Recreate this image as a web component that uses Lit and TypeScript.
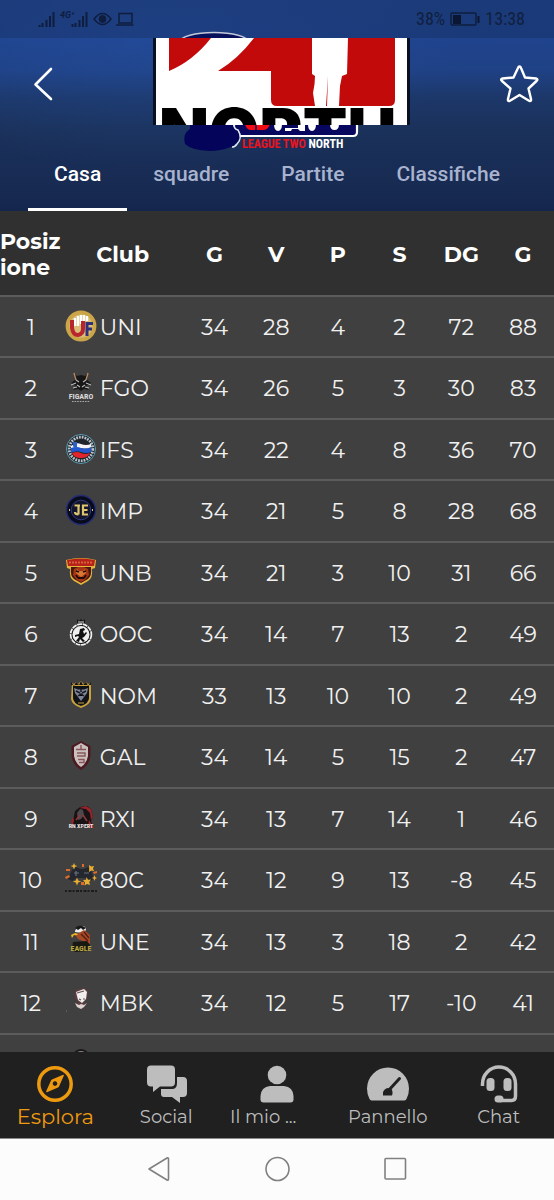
import { LitElement, html, svg, css } from "lit";
import { customElement, state } from "lit/decorators.js";
import { classMap } from "lit/directives/class-map.js";

type Row = { club: string; values: number[]; badge: unknown };

const badges: Record<string, unknown> = {
  UNI: svg`
    <circle cx="16" cy="16" r="15.4" fill="#caa648"/>
    <circle cx="16" cy="16" r="11.5" fill="#d9bd78"/>
    <path d="M10 8v8M13 6v10M16 5v9M19 5v6M22 6v5" stroke="#fff" stroke-width="2.4"/>
    <path d="M7 10v8q1 7 6 7 5-1 5-6v-8" fill="none" stroke="#b9252c" stroke-width="4"/>
    <path d="M22 26V13.500h6M22 19h5" fill="none" stroke="#30317d" stroke-width="3"/>`,
  FGO: svg`
    <path d="M9 2l3 3 4-1 4 1 3-3-1 7 4 3-5 3 3 4-5-1-3 2-3-2-5 1 3-4-5-3 4-3z" fill="#171717"/>
    <path d="M9 2l2 7M23 2l-2 7" stroke="#b38a62" stroke-width="1.4"/>
    <path d="M11 9l3 2M21 9l-3 2M6 14l5-2M26 14l-5-2M12 14l3 2M20 14l-3 2M8 17l4-1M24 17l-4-1" stroke="#b9b9b9" stroke-width="1.1"/>
    <text class="badge-text" x="16" y="27.500" font-size="8" fill="#d8d8d8">FIGARO</text>
    <path d="M7 30.500h18" stroke="#aaa" stroke-width="1.200" stroke-dasharray="1.600 1"/>`,
  IFS: svg`
    <circle cx="16" cy="16" r="14.500" fill="#20252b" stroke="#5f9fb5" stroke-width="1"/>
    <circle cx="16" cy="16" r="11.800" fill="none" stroke="#b8c2c8" stroke-width="2.800" stroke-dasharray="1.800 1"/>
    <path d="M6 13q5-4 10-2t10 0v4q-5 1-10 0t-10 1z" fill="#f4f4f8"/>
    <path d="M6 15q5-2 10 0t10-1v5q-5 2-10 0t-10 1z" fill="#2257cf"/>
    <path d="M7 20q5-2 9 0t9 0q-2 5-9 5t-9-5z" fill="#e2252c"/>
    <path d="M8 9h4v5q-2 3-4-1z" fill="#2b61c6"/>`,
  IMP: svg`
    <circle cx="16" cy="16" r="14.500" fill="#080b1c" stroke="#252c74" stroke-width="1.400"/>
    <circle cx="16" cy="16" r="9.800" fill="#12152b" stroke="#32397b" stroke-width="1"/>
    <path d="M9.500 11.500H15M13.500 11.500v9M10 18q0 2.500 3.500 2.500M23 11.500h-5v9h5M18 16h4.500" fill="none" stroke="#dfc56e" stroke-width="2.200"/>
    <path d="M4 16h1M27 16h1" stroke="#dfc56e" stroke-width="2"/>`,
  UNB: svg`
    <path d="M1 4q15-4 30 0l-1 8-3 1q1 9-4 12l-7 4-7-4q-5-3-4-12l-3-1z" fill="#e3b53a"/>
    <path d="M2 4q14-3 28 0l-1 6H3z" fill="#b72118"/>
    <path d="M6 11h20q1 9-3 12l-7 4-7-4q-4-3-3-12z" fill="#481710"/>
    <path d="M9 13l4-2h6l4 2 1 6-4 5-4 2-4-2-4-5z" fill="#a43617"/>
    <path d="M12 13l2 2h4l2-2 1 4-5 4-5-4z" fill="#d97a34"/>
    <path d="M11 15l3 1M21 15l-3 1M13 22h6M11 19l2 3M21 19l-2 3" stroke="#250b08" stroke-width="1.800"/>
    <path d="M4 6.500h24" stroke="#d4603c" stroke-width="2" stroke-dasharray="2 1"/>`,
  OOC: svg`
    <path d="M12 2l2 2 2-2 2 2 2-2v4h-8z" fill="#151515"/>
    <path d="M13 5h6" stroke="#ddd" stroke-width="1"/>
    <circle cx="16" cy="17.500" r="11.300" fill="#171717"/>
    <circle cx="16" cy="17.500" r="10.400" fill="none" stroke="#f0f0f0" stroke-width="1.800" stroke-dasharray="5 .6"/>
    <circle cx="16" cy="17.500" r="8.500" fill="#efefef"/>
    <path d="M15 12l4-1 1 2-2 1 1 3 2-2 1 1-3 4-2 1 3 3-2 1-3-3-1 3-3-1 3-4-1-1-3 1v-2l4-1z" fill="#111"/>`,
  NOM: svg`
    <path d="M7 4l2 1 2-2 2 2 3-3 3 3 2-2 2 2 3-1v16q-1 6-10 9-9-3-10-9z" fill="#c7a23f"/>
    <path d="M6 3l3 4 2-4 3 3 2-4 2 4 3-3 2 4 3-4v3H6z" fill="#151515"/>
    <path d="M8 7h16v12q0 5-8 8-8-3-8-8z" fill="#111318"/>
    <path d="M9 9l4 1.500h6L23 9l-1 5-3 4-3 4-3-4-3-4z" fill="#7e8695"/>
    <path d="M11 12l4 2M21 12l-4 2M13 17l3-2 3 2M16 10v3" stroke="#171a24" stroke-width="1.500"/>
    <path d="M13 24h6" stroke="#c7a23f" stroke-width="1"/>`,
  GAL: svg`
    <path d="M16 1l9.500 5v10q-1 9-9.500 14-8.500-5-9.500-14V6z" fill="#4c1a20"/>
    <path d="M16 3l7 4v9q-1 7-7 11-6-4-7-11V7z" fill="#c9c0c0"/>
    <path d="M11 9.500h10M16 5v4M12 13h8v3h-8M13 19.500h6v3h-5" fill="none" stroke="#8b5558" stroke-width="1.400"/>`,
  RXI: svg`
    <path d="M8 19l2-10 5-4 7-1 4 3 2 8-2 4 2 5-5 1H8z" fill="#171314"/>
    <path d="M14 6l7-2 5 3 2 8-2 3-1-7-4-4zM24 18l5 8h-6zM8 15l-2 5 2 3 1-5z" fill="#96252b"/>
    <path d="M12 11l3-4 3 1 1 5-3 4-3 1z" fill="#51484b"/>
    <path d="M11 18l4-5M18 13l4 6" stroke="#92383c" stroke-width="1.500"/>
    <text class="badge-text" x="16" y="26" font-size="6" fill="#f1e8e8">RN XPERT</text>`,
  "80C": svg`
    <path d="M7 7l4-3 4 2h4l4-2 3 3 3 9-4 2-5-3h-8l-5 3-4-2z" fill="#25272f"/>
    <g fill="#e8ae32"><path d="M9 0l1 2.200 2.400.8L10 4 9 6.400 8 4l-2.400-1L8 2.200zM24 2l2.400 1.500L29 3l-1 2.500L29 8l-2.600-.6L24 9l.2-3zM12 14.500l1.200 3 3 1-3 1-1.200 3-1.200-3-3-1 3-1zM21.500 14l1.500 2.800 3-.3-1.800 2.500.8 3-3-1-2.600 1.400.6-3-2-2.200 3-.4zM29.500 12l.8 2.200 2 .8-2 .8-.8 2.200-.8-2.200-2-.8 2-.8z"/></g>
    <g fill="#dd6c2a"><path d="M1 6l4 0 0 2-4 0zM0 14l4-2 1 2-4 2zM28 9l4-1v2l-3 1zM16 19h3v3h-3zM17 1h2v3h-2z"/></g>
    <path d="M11 8v5M9 10h5M19 10h5" stroke="#667083" stroke-width="1.200"/>
    <path d="M0 28h32" stroke="#1c1c1c" stroke-width="2" stroke-dasharray="2 1.500 3 1"/>`,
  UNE: svg`
    <path d="M10 6q2-5 7-5 4 0 4 4l-3 3-8-1z" fill="#eee"/>
    <path d="M10 3q5-5 11 0l-3 2-2-2-3 2z" fill="#181818"/>
    <path d="M6 10l4-2 4 1v2l-5-1-2 3z" fill="#efb325"/>
    <path d="M14 8l5-3 6 5 0 9-5-2-7-3-2-3z" fill="#a94a25"/>
    <path d="M16 9l7 7M19 7l5 6" stroke="#551f16" stroke-width="1.500"/>
    <path d="M8 17l14-1 3 4-1 6-14 1-3-3z" fill="#191914"/>
    <text class="badge-text" x="16" y="26" font-size="8" fill="#b9a83f">EAGLE</text>`,
  MBK: svg`
    <path d="M10 5l3-2 7-1 3 3-1 8-3 3 2 3-3 4h-4l-3-4 2-3-3-4z" fill="#5c3c3f"/>
    <path d="M11 6l8-3 3 3-1 7-4 4-4-3z" fill="#f1eeee"/>
    <path d="M12 7l7-2M14 13l2 1M18 13h2" stroke="#635052" stroke-width="1.200"/>
    <path d="M10 17l4 2 2-1 3 1 3-2-3 4-3 2-4-2z" fill="#ddd1d1"/>
    <path d="M1 25h1" stroke="#777"/>`,
};

const standings: Row[] = [
  ["UNI", 34, 28, 4, 2, 72, 88],
  ["FGO", 34, 26, 5, 3, 30, 83],
  ["IFS", 34, 22, 4, 8, 36, 70],
  ["IMP", 34, 21, 5, 8, 28, 68],
  ["UNB", 34, 21, 3, 10, 31, 66],
  ["OOC", 34, 14, 7, 13, 2, 49],
  ["NOM", 33, 13, 10, 10, 2, 49],
  ["GAL", 34, 14, 5, 15, 2, 47],
  ["RXI", 34, 13, 7, 14, 1, 46],
  ["80C", 34, 12, 9, 13, -8, 45],
  ["UNE", 34, 13, 3, 18, 2, 42],
  ["MBK", 34, 12, 5, 17, -10, 41],
].map(([club, ...values]) => ({
  club: String(club),
  values: values as number[],
  badge: badges[String(club)],
}));

@customElement("phone-status")
class PhoneStatus extends LitElement {
  static styles = css`
    :host {
      display: flex;
      align-items: center;
      justify-content: space-between;
      height: 38px;
      box-sizing: border-box;
      padding: 0 29px 0 37px;
      background: rgba(10, 22, 45, 0.2);
      color: #10203f;
      font: 18px/22px "Roboto Condensed", Roboto, sans-serif;
    }
    .side { display: flex; align-items: center; gap: 5px; }
    svg { display: block; }
    .net { font: bold italic 9px Roboto, sans-serif; }
  `;
  render() {
    return html`
      <div class="side">
        <svg width="98" height="18" viewBox="37 10 98 18" fill="none" stroke="#0f1e3e">
          <path d="M39.500 27v-2M42.500 27v-4M46.500 27v-7M50 27v-11M53.500 27V12M72.500 27v-3M75.500 27v-4M79.500 27v-7M83 27v-11M86.500 27V12" stroke-width="2"/>
          <text class="net" x="60" y="18" fill="#0f1e3e" stroke="none">4G⁺</text>
          <path d="M94 19q8.500-11 17 0-8.500 11-17 0z" stroke-width="1.500"/>
          <circle cx="102.500" cy="19" r="3.500" fill="#0f1e3e"/>
          <path d="M119 13.500h13v9.500h-13zM116 25h17.500" stroke-width="1.500"/>
        </svg>
      </div>
      <div class="side">
        <span>38%</span>
        <svg width="30" height="15" viewBox="0 0 30 15">
          <rect x="1" y="1" width="25" height="12" rx="1" fill="none" stroke="#0f1e3e" stroke-width="1.500"/>
          <path d="M3 3h8v9H3zM27.500 4h2v7h-2z" fill="#0b1732"/>
        </svg>
        <span>13:38</span>
      </div>`;
  }
}

@customElement("league-header")
class LeagueHeader extends LitElement {
  @state() private active = 0;
  private tabs = ["Casa", "squadre", "Partite", "Classifiche"];

  static styles = css`
    :host {
      display: block;
      background:
        radial-gradient(ellipse at 30% 18%, rgba(43, 93, 181, 0.25), transparent 55%),
        linear-gradient(#20448b 0, #1f438d 38px, #1f4185 70px, #1c3769 98px, #1a315a 130px, #172a52 190px, #15264d 100%);
    }
    .bar {
      display: grid;
      grid-template-columns: 1fr auto 1fr;
      height: 99px;
    }
    button {
      border: 0;
      padding: 0;
      background: none;
      cursor: pointer;
    }
    svg { display: block; }
    .icon { display: flex; height: 91px; align-items: center; }
    .back { padding-left: 32px; }
    .star { padding-right: 14px; justify-content: flex-end; }
    .logo { overflow: visible; }
    .crest { font: 900 65px Inter, sans-serif; }
    .caption { font: bold 12px "Roboto Condensed", Roboto, sans-serif; }
    .tabs { display: flex; justify-content: center; }
    .tab {
      height: 74px;
      padding: 0 26px;
      border-top: 3px solid transparent;
      border-bottom: 3px solid transparent;
      color: #a8b3cf;
      font: 500 21px/26px Roboto, sans-serif;
    }
    .tab.on { color: #fff; border-bottom-color: #fff; }
  `;

  render() {
    return html`
      <phone-status></phone-status>
      <div class="bar">
        <button class="icon back" aria-label="Indietro">
          <svg width="22" height="36" viewBox="32 65 22 36" fill="none" stroke="#fff" stroke-width="2.600" stroke-linecap="round" stroke-linejoin="round"><path d="M51 68L35.500 83.500 51 98"/></svg>
        </button>
        <svg class="logo" width="262" height="87" viewBox="146 38 262 87" role="img" aria-label="League Two North">
          <defs><clipPath id="plate"><rect x="155" y="38" width="253" height="87"/></clipPath></defs>
          <ellipse cx="214" cy="42" rx="34" ry="9.500" fill="#08105c" stroke="#c2c8da" stroke-width="1.500"/>
          <path d="M234 123h123v9q0 4-4 4H239q-3 0-5-3z" fill="#07075f" stroke="#fff" stroke-width="2.200"/>
          <path d="M190 124h43q0 4 5 6 4 6 0 11-6 9-28 10-19-1-25-7-3-10 5-15z" fill="#04045b"/>
          <path d="M234 125q0 4 4 5 5 8-1 14-2 3-5 3" fill="none" stroke="#e4e9f6" stroke-width="1.500"/>
          <path d="M245 124h25q-2 6-7 6h-13q-4-1-5-6z" fill="#f10b12"/>
          <path d="M256 125v5" stroke="#07075f" stroke-width="1.500"/>
          <path d="M274 124h8q0 7-4 7t-4-7zM285 131v-3h13v-4h7v7h-5l-2-2h-6l-1 2zM308 124h8q0 7-4 7t-4-7zM330 124h9q0 6-4.500 6t-4.500-6z" fill="#fff"/>
          <rect x="153" y="38" width="257" height="87" fill="#091022"/>
          <rect x="156" y="38" width="251" height="87" fill="#fff"/>
          <path d="M169 38h42q-18 23-42 33zM254 38h141v62q0 6-6 6H277q-6 0-6-6V71h-53q20-12 36-33z" fill="#c20a0b"/>
          <path d="M312 38h36l-1 36-5 2-2 10-1 20h-12l1-30-2 30h-11l-2-13q2-9 2-17l-3-2z" fill="#fff"/>
          <g clip-path="url(#plate)"><text class="crest" x="159" y="155">NORTH</text></g>
          <text class="caption" x="242" y="148" fill="#ed121c">LEAGUE TWO <tspan fill="#fff">NORTH</tspan></text>
        </svg>
        <button class="icon star" aria-label="Preferiti">
          <svg width="42" height="40" viewBox="0 0 42 40" fill="none" stroke="#fff" stroke-width="2.400" stroke-linejoin="round"><path d="M21.500 2.500q1 0 1.500 1.500L27 13.500l11 1q2.500.5.500 2.500L30.500 24.500 33 35q.5 3-2 1.700L21.500 31l-9.500 5.700Q9.500 38 10 35l2.500-10.500L4 17Q2 15 4.500 14.500L15.500 13.500 20 4Q20.500 2.500 21.500 2.500z"/></svg>
        </button>
      </div>
      <nav class="tabs">
        ${this.tabs.map((t, i) => html`<button class=${classMap({ tab: true, on: i === this.active })} @click=${() => (this.active = i)}>${t}</button>`)}
      </nav>`;
  }
}

@customElement("standings-table")
class StandingsTable extends LitElement {
  static styles = css`
    :host { display: block; background: #404040; }
    table {
      width: 100%;
      border-collapse: separate;
      border-spacing: 0;
      table-layout: fixed;
      color: #f1f1f1;
      font: 22px/26px Montserrat, Inter, sans-serif;
    }
    th, td {
      box-sizing: border-box;
      padding: 2px 0 0;
      border-bottom: 2px solid #5c5c5c;
      text-align: center;
      font-weight: 400;
    }
    thead th {
      height: 86px;
      padding-top: 4px;
      background: #303030;
      color: #fff;
      font-size: 22px;
      font-weight: 700;
    }
    thead .pos { text-align: left; }
    .club-col { width: 22%; }
    tbody td, tbody th { height: 61px; }
    tbody tr:nth-child(even) > * { height: 62px; }
    .club { display: flex; align-items: center; gap: 3px; padding-left: 3px; }
    .badge { flex: none; display: block; margin-bottom: 4px; }
    .badge-text { font-family: "Roboto Condensed", Roboto, sans-serif; font-weight: bold; text-anchor: middle; }
  `;
  render() {
    return html`<table>
      <colgroup><col /><col class="club-col" /><col span="6" /></colgroup>
      <thead><tr>
        <th class="pos">Posiz<wbr />ione</th>
        ${["Club", "G", "V", "P", "S", "DG", "G"].map((h) => html`<th>${h}</th>`)}
      </tr></thead>
      <tbody>
        ${standings.map((r, i) => html`<tr>
          <td>${i + 1}</td>
          <th scope="row"><div class="club"><svg class="badge" width="32" height="32" viewBox="0 0 32 32">${r.badge}</svg><span>${r.club}</span></div></th>
          ${r.values.map((v) => html`<td>${v}</td>`)}
        </tr>`)}
        <tr>
          <td></td>
          <th><div class="club"><svg class="badge" width="32" height="32" viewBox="0 0 32 32"><circle cx="16" cy="10" r="8" fill="#8c8386" stroke="#191617" stroke-width="2"/></svg></div></th>
          <td colspan="6"></td>
        </tr>
      </tbody>
    </table>`;
  }
}

const navItems = [
  { label: "Esplora", cls: "on", icon: svg`<circle cx="21" cy="20" r="16.200" fill="none" stroke="currentColor" stroke-width="3.500"/><path fill-rule="evenodd" d="M28.500 11q1.800-.7 1.200 1L25 22.500q-.3.700-1 1L13.500 28q-1.800.7-1.200-1L17 16.500q.3-.7 1-1zM21 17.300a2.300 2.300 0 1 0 .01 0z" fill="currentColor"/>` },
  { label: "Social", cls: "", icon: svg`<path fill="currentColor" d="M6 1.500h20q4 0 4 4v13q0 4-4 4H15L8 28v-5.500H6q-4 0-4-4v-13q0-4 4-4z"/><path fill="currentColor" d="M32 13h6q4 0 4 4v12q0 4-4 4h-3v6l-8-6h-8q-3 0-3-3v-5h11q5 0 5-6z"/>` },
  { label: "Il mio ...", cls: "wide", icon: svg`<circle cx="21" cy="11" r="9.300" fill="currentColor"/><path fill="currentColor" d="M14 22h14q9 1 9.500 10v3.500q0 3-3 3h-27q-3 0-3-3V32Q5 23 14 22z"/>` },
  { label: "Pannello", cls: "", icon: svg`<path fill="currentColor" d="M21 3.500a21 21 0 0 1 21 21q0 6-2.500 10.500-1 1.500-2.500 1.500H5q-1.500 0-2.500-1.500Q0 30.500 0 24.500a21 21 0 0 1 21-21z"/><path d="M22 26l10.500-11.500" stroke="#202020" stroke-width="3" stroke-linecap="round"/><path d="M16 31.500v-3q1-4 5-4.500l4 1.500q1 3 0 6z" fill="#202020"/>` },
  { label: "Chat", cls: "", icon: svg`<path d="M4.500 22v-2a16.500 17 0 0 1 33 0v12q0 4.500-4 4.500H22" fill="none" stroke="currentColor" stroke-width="3.500"/><rect x="8.500" y="14" width="8" height="13" rx="3.500" fill="currentColor"/><rect x="25.500" y="14" width="8" height="13" rx="3.500" fill="currentColor"/><rect x="16.500" y="31.500" width="9" height="7" rx="3.500" fill="currentColor"/>` },
];

@customElement("app-root")
class AppRoot extends LitElement {
  static styles = css`
    :host {
      display: flex;
      flex-direction: column;
      height: 100vh;
      overflow: hidden;
      background: #404040;
    }
    main { flex: 1; min-height: 0; overflow: hidden; }
    svg { display: block; }
    .nav {
      display: grid;
      grid-template-columns: repeat(5, 1fr);
      box-sizing: border-box;
      height: 86px;
      padding-top: 12px;
      background: #202020;
    }
    .item {
      display: flex;
      flex-direction: column;
      align-items: center;
      gap: 1px;
      color: #bdbdbd;
      text-decoration: none;
      font: 18px/24px Montserrat, Inter, sans-serif;
    }
    .item.on { color: #ee9a10; font-size: 21px; }
    .item.wide span { width: 94px; }
    .system {
      display: flex;
      align-items: center;
      justify-content: center;
      gap: 93px;
      box-sizing: border-box;
      height: 62px;
      padding-bottom: 2px;
      border-top: 1px solid #8a8a8a;
      background: #fcfcfc;
    }
    .system button { padding: 0; border: 0; background: none; }
  `;
  render() {
    return html`
      <league-header></league-header>
      <main><standings-table></standings-table></main>
      <nav class="nav">
        ${navItems.map((n) => html`<a class="item ${n.cls}" href="#"><svg width="42" height="40" viewBox="0 0 42 40">${n.icon}</svg><span>${n.label}</span></a>`)}
      </nav>
      <div class="system">
        <button aria-label="Indietro"><svg width="25" height="26" viewBox="0 0 25 26"><path d="M2 13L20 2q1.500-.5 1.500 1v20q0 1.500-1.500 1z" fill="none" stroke="#808080" stroke-width="1.600" stroke-linejoin="round"/></svg></button>
        <button aria-label="Home"><svg width="25" height="26" viewBox="0 0 25 26"><circle cx="12.500" cy="13" r="11.500" fill="none" stroke="#808080" stroke-width="1.600"/></svg></button>
        <button aria-label="Recenti"><svg width="25" height="26" viewBox="0 0 25 26"><rect x="2" y="2.500" width="20.500" height="20.500" rx="1" fill="none" stroke="#808080" stroke-width="1.600"/></svg></button>
      </div>`;
  }
}
